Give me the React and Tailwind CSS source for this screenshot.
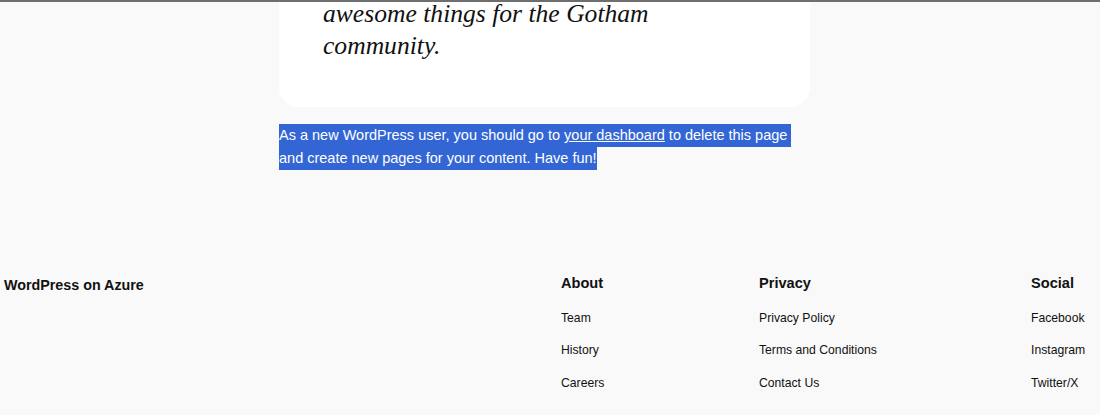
import React from "react";

const sans = "font-['Liberation_Sans',Arial,sans-serif]";
const headingBase = `${sans} font-bold leading-[26px] text-[#111]`;
const link = `${sans} text-[12.2px] leading-[20px] text-[#111]`;
const hl = "block w-fit h-[23px] bg-[#3366d4] text-white";

const columns = [
  { title: "About", width: "w-[198px]", items: ["Team", "History", "Careers"] },
  {
    title: "Privacy",
    width: "w-[272px]",
    items: ["Privacy Policy", "Terms and Conditions", "Contact Us"],
  },
  { title: "Social", width: "w-[69px]", items: ["Facebook", "Instagram", "Twitter/X"] },
];

export default function App() {
  return (
    <div className="min-h-[415px] bg-[#f9f9f9] border-t-2 border-[#6e6e6e] overflow-hidden">
      {/* quote card, scrolled partly out of view */}
      <div className="ml-[279px] w-[531px] -mt-[4px] bg-white rounded-b-[20px] pl-[44px] pb-[45px]">
        <p className="font-['Liberation_Serif','Times_New_Roman',serif] italic text-[25.6px] leading-[32px] text-[#111]">
          awesome things for the Gotham
          <br />
          community.
        </p>
      </div>

      <div className={`ml-[279px] mt-[17px] text-[14.5px] leading-[23px] ${sans}`}>
        <span className={`${hl} pr-[4px]`}>
          As a new WordPress user, you should go to{" "}
          <a href="#" className="underline">your dashboard</a> to delete this page
        </span>
        <span className={hl}>and create new pages for your content. Have fun!</span>
      </div>

      <footer className="mt-[100px] flex">
        <div className="flex-1 pl-[4px] pt-[2px]">
          <p className={`${headingBase} text-[14.3px]`}>WordPress on Azure</p>
        </div>
        <div className="flex">
          {columns.map((col) => (
            <div key={col.title} className={col.width}>
              <p className={`${headingBase} text-[14.6px]`}>{col.title}</p>
              <ul className="mt-[11.5px] flex flex-col gap-[12.5px]">
                {col.items.map((it) => (
                  <li key={it} className={link}>
                    {it}
                  </li>
                ))}
              </ul>
            </div>
          ))}
        </div>
      </footer>
    </div>
  );
}
